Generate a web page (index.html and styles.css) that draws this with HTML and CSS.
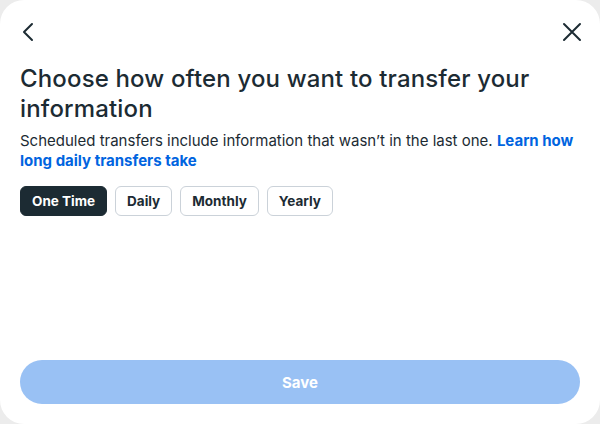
FILE: index.html
```html
<!DOCTYPE html>
<html lang="en">
<head>
<meta charset="utf-8">
<link rel="stylesheet" href="styles.css">
</head>
<body>
<div class="modal">
  <div class="topbar">
    <button class="icon-btn" aria-label="Back">
      <svg width="24" height="24" viewBox="0 0 24 24"><path d="M16 4 L8 12 L16 20" fill="none" stroke="#1c2b33" stroke-width="2" stroke-linecap="round" stroke-linejoin="round"/></svg>
    </button>
    <button class="icon-btn" aria-label="Close">
      <svg width="24" height="24" viewBox="0 0 24 24"><path d="M4 4 L20 20 M20 4 L4 20" fill="none" stroke="#1c2b33" stroke-width="2" stroke-linecap="round"/></svg>
    </button>
  </div>
  <div class="content">
    <h1 class="title">Choose how often you want to transfer your information</h1>
    <p class="desc">Scheduled transfers include information that wasn’t in the last one. <a class="link" href="#">Learn how long daily transfers take</a></p>
    <div class="pills">
      <button class="pill active">One Time</button>
      <button class="pill">Daily</button>
      <button class="pill">Monthly</button>
      <button class="pill">Yearly</button>
    </div>
  </div>
  <div class="footer">
    <button class="save">Save</button>
  </div>
</div>
</body>
</html>
```
FILE: styles.css
```css
html, body {
  margin: 0;
  padding: 0;
  background: #ececec;
  width: 600px;
  height: 424px;
  overflow: hidden;
}
.modal {
  box-sizing: border-box;
  width: 600px;
  height: 424px;
  background: #fff;
  border-radius: 24px;
  display: flex;
  flex-direction: column;
  font-family: Inter, "Noto Sans", sans-serif;
  color: #1c2b33;
}
.topbar {
  display: flex;
  justify-content: space-between;
  align-items: center;
  padding: 20px 16px 0 16px;
  height: 44px;
  box-sizing: border-box;
}
.icon-btn {
  border: 0;
  background: none;
  padding: 0;
  width: 24px;
  height: 24px;
  display: flex;
}
.content {
  padding: 20px 20px 0 20px;
  flex: 1;
}
.title {
  margin: 0;
  font-size: 24px;
  line-height: 30px;
  font-weight: 500;
  letter-spacing: 0.15px;
}
.desc {
  margin: 7px 0 0 0;
  font-size: 15px;
  line-height: 20px;
  color: #1c2b33;
}
.link {
  color: #0064e0;
  font-weight: 700;
  text-decoration: none;
}
.pills {
  display: flex;
  gap: 8px;
  margin-top: 15px;
}
.pill {
  font-family: inherit;
  font-size: 13.5px;
  font-weight: 700;
  color: #1c2b33;
  background: #fff;
  border: 1px solid #cbd2d9;
  border-radius: 6px;
  height: 30px;
  padding: 0 11px;
}
.pill.active {
  background: #1c2b33;
  border-color: #1c2b33;
  color: #fff;
}
.footer {
  padding: 0 20px 20px 20px;
}
.save {
  width: 100%;
  height: 44px;
  border: 0;
  border-radius: 22px;
  background: #99c1f4;
  color: #fff;
  font-family: inherit;
  font-size: 15px;
  font-weight: 700;
}
```
